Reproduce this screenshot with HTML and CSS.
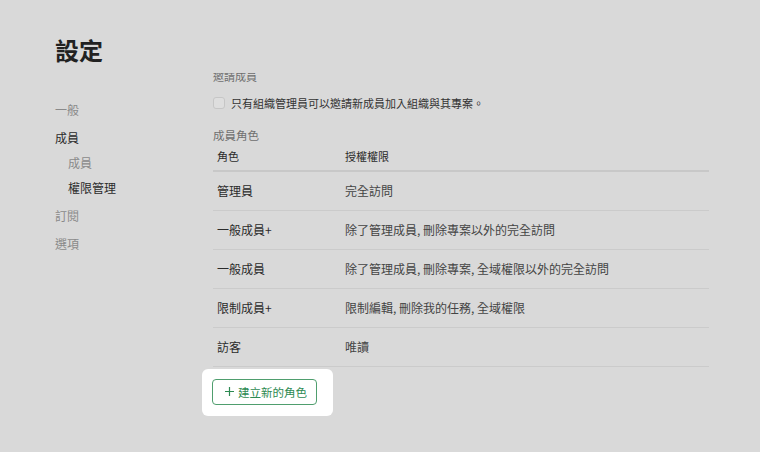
FILE: index.html
```html
<!DOCTYPE html>
<html lang="zh-Hant">

<head>
  <meta charset="UTF-8">
  <meta name="viewport" content="width=device-width, initial-scale=1.0">
  <title>設定</title>
  <link rel="stylesheet" href="styles.css">
</head>

<body>
  <div class="layout">
    <aside class="sidebar">
      <h1>設定</h1>
      <ul class="nav">
        <li class="nav-item">一般</li>
        <li class="nav-item active">成員</li>
        <li class="nav-item sub">成員</li>
        <li class="nav-item sub active">權限管理</li>
        <li class="nav-item">訂閱</li>
        <li class="nav-item">選項</li>
      </ul>
    </aside>

    <main class="main">
      <div class="content">
        <div class="section-label">邀請成員</div>
        <label class="check-row">
          <span class="checkbox"></span>
          只有組織管理員可以邀請新成員加入組織與其專案。
        </label>

        <div class="section-label roles-label">成員角色</div>
        <table class="roles">
          <thead>
            <tr>
              <th class="col-role">角色</th>
              <th>授權權限</th>
            </tr>
          </thead>
          <tbody>
            <tr>
              <td>管理員</td>
              <td class="perm">完全訪問</td>
            </tr>
            <tr>
              <td>一般成員+</td>
              <td class="perm">除了管理成員, 刪除專案以外的完全訪問</td>
            </tr>
            <tr>
              <td>一般成員</td>
              <td class="perm">除了管理成員, 刪除專案, 全域權限以外的完全訪問</td>
            </tr>
            <tr>
              <td>限制成員+</td>
              <td class="perm">限制編輯, 刪除我的任務, 全域權限</td>
            </tr>
            <tr>
              <td>訪客</td>
              <td class="perm">唯讀</td>
            </tr>
          </tbody>
        </table>

        <!-- spotlight around the button -->
        <div class="spotlight">
          <button class="btn-new">
            <svg width="9" height="9" viewBox="0 0 9 9">
              <path d="M4.5 0v9M0 4.5h9" stroke="currentColor" stroke-width="1.2" fill="none" />
            </svg>
            建立新的角色
          </button>
        </div>
      </div>
    </main>
  </div>
</body>

</html>
```

FILE: styles.css
```css
* {
  box-sizing: border-box;
}

body {
  margin: 0;
  background: #d9d9d9;
  font-family: "Noto Sans CJK TC", "Noto Sans", sans-serif;
  color: #2b2b2b;
}

.layout {
  display: flex;
  padding-left: 55px;
  height: 452px;
}

/* Left column */
.sidebar {
  width: 158px;
  flex-shrink: 0;
  padding-top: 37px;
}

.sidebar h1 {
  margin: 0;
  font-size: 24px;
  line-height: 26px;
  font-weight: 700;
  color: #222;
}

.nav {
  list-style: none;
  margin: 37px 0 0;
  padding: 0;
}

.nav-item {
  font-size: 12px;
  line-height: 20px;
  color: #8a8a8a;
  margin-top: 8px;
}

.nav-item:first-child {
  margin-top: 0;
}

.nav-item.sub {
  padding-left: 13px;
  margin-top: 5px;
}

.nav-item.active {
  color: #2b2b2b;
}

/* Right column (scrolled, top clipped) */
.main {
  width: 496px;
  margin-top: 73px;
  overflow-x: visible;
  overflow-y: clip;
}

.content {
  margin-top: -5px;
}

.section-label {
  font-size: 11px;
  line-height: 16px;
  color: #6f6f6f;
}

.check-row {
  display: flex;
  align-items: center;
  gap: 6px;
  margin-top: 9px;
  height: 20px;
  font-size: 11px;
  color: #333;
}

.checkbox {
  width: 12px;
  height: 12px;
  border: 1px solid #c6c6c6;
  border-radius: 3px;
  background: #dedede;
}

.roles-label {
  margin-top: 13px;
  font-size: 11.5px;
  line-height: 18px;
}

.roles {
  width: 100%;
  border-collapse: collapse;
}

.roles th {
  font-size: 11px;
  font-weight: 400;
  text-align: left;
  height: 27px;
  padding: 0 4px 2px;
  border-bottom: 2px solid #c8c8c8;
  color: #2b2b2b;
}

.roles .col-role {
  width: 128px;
}

.roles td {
  font-size: 12px;
  height: 39px;
  padding: 0 4px;
  border-bottom: 1px solid #cbcbcb;
  color: #2b2b2b;
}

.roles td.perm {
  color: #444;
}

.spotlight {
  display: inline-block;
  margin: 2px 0 0 -11px;
  padding: 10px 16px 11px 10px;
  background: #fff;
  border-radius: 6px;
}

.btn-new {
  display: flex;
  align-items: center;
  gap: 4px;
  height: 26px;
  padding: 0 9px 0 12px;
  background: #fff;
  border: 1px solid #4f9e6e;
  border-radius: 4px;
  color: #2d8a52;
  font-family: inherit;
  font-size: 11.5px;
  cursor: pointer;
}
```
